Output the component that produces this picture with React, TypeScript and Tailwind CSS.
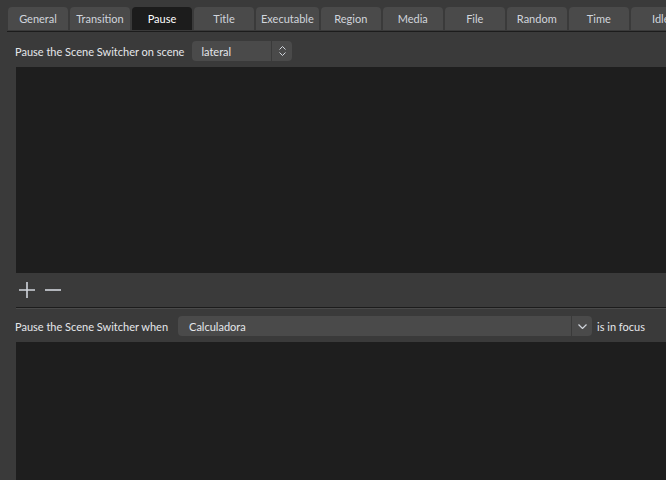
const tabs = ['General', 'Transition', 'Pause', 'Title', 'Executable', 'Region', 'Media', 'File', 'Random', 'Time', 'Idle']

function Tab({ label }: { label: string }) {
  const active = label === 'Pause'
  return (
    <div
      className={`flex h-5.75 min-w-15 shrink-0 items-center justify-center rounded-t-sm px-1.25 pt-0.5 ${
        active ? 'bg-[#1c1c1c] text-white' : 'bg-[#4a4a4a] text-gray-300'
      }`}
    >
      {label}
    </div>
  )
}

export default function App() {
  return (
    <div className="flex h-screen flex-col overflow-hidden bg-[#3a3a3a] text-[11px] whitespace-nowrap text-gray-200 [font-family:'Lato',sans-serif]">
      <div className="ml-1.75 flex gap-0.5 border-b border-[#1c1c1c] pt-1.75 pb-px pl-px">
        {tabs.map((t) => (
          <Tab key={t} label={t} />
        ))}
      </div>

      <div className="flex min-h-0 flex-1 flex-col pl-4">
        <div className="-ml-px flex shrink-0 items-center gap-2 pt-2.25 pb-1.5">
          <span className="pt-0.5">Pause the Scene Switcher on scene</span>
          <div className="flex h-5 w-25 items-stretch rounded-sm bg-[#4a4a4a]">
            <span className="flex flex-1 items-center border-r border-[#3a3a3a] pt-0.5 pl-2.25">lateral</span>
            <span className="flex w-5 flex-col items-center justify-center gap-0.5 text-gray-300">
              <svg width="7" height="4" viewBox="0 0 7 4" fill="none" stroke="currentColor">
                <path d="M.5 3.5l3-3 3 3" />
              </svg>
              <svg width="7" height="4" viewBox="0 0 7 4" fill="none" stroke="currentColor">
                <path d="M.5.5l3 3 3-3" />
              </svg>
            </span>
          </div>
        </div>

        <div className="h-51.5 shrink-0 bg-[#1e1e1e]" />

        <div className="flex h-8.5 shrink-0 items-center gap-2.5 pl-0.75 text-gray-300">
          <svg width="16" height="16" viewBox="0 0 16 16" fill="none" stroke="currentColor" strokeWidth="1.6">
            <path d="M8 0v16M0 8h16" />
          </svg>
          <svg width="16" height="16" viewBox="0 0 16 16" fill="none" stroke="currentColor" strokeWidth="1.6">
            <path d="M0 8h16" />
          </svg>
        </div>

        <div className="h-0.5 shrink-0 border-t border-[#1c1c1c] bg-[#4a4a4a]" />

        <div className="-ml-px flex shrink-0 items-center gap-2.5 pt-1.75 pb-1.5">
          <span className="pt-0.5">Pause the Scene Switcher when</span>
          <div className="flex h-5 w-103.5 items-stretch rounded-sm bg-[#4a4a4a]">
            <span className="flex flex-1 items-center border-r border-[#3a3a3a] pt-0.5 pl-2.75">Calculadora</span>
            <span className="flex w-5 items-center justify-center text-gray-300">
              <svg width="9" height="5" viewBox="0 0 9 5" fill="none" stroke="currentColor" strokeWidth="1.2">
                <path d="M.5.5l4 4 4-4" />
              </svg>
            </span>
          </div>
          <span className="-ml-1.25 pt-0.5">is in focus</span>
        </div>

        <div className="flex-1 bg-[#1e1e1e]" />
      </div>
    </div>
  )
}
